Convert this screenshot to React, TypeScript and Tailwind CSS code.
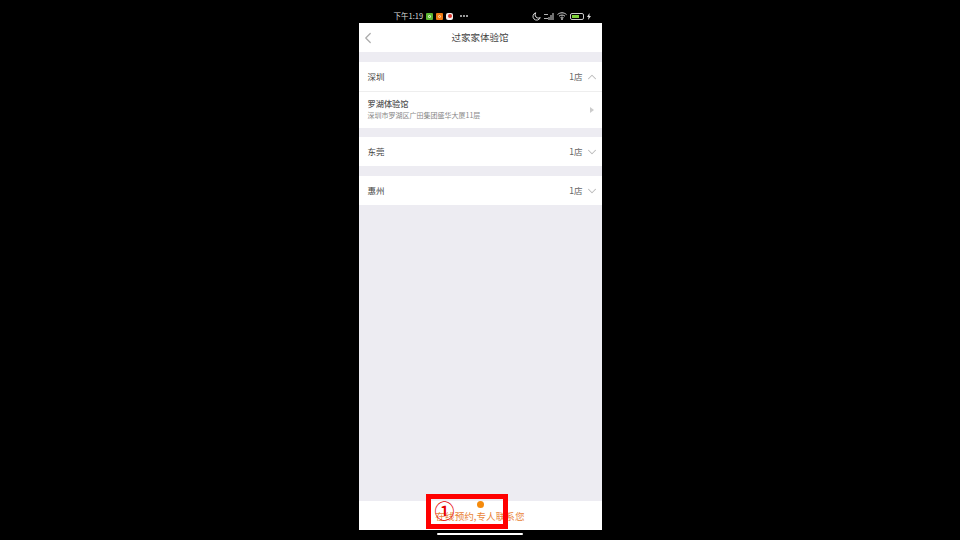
import { ChevronDown, ChevronLeft, ChevronUp } from "lucide-react";

const CJK = "font-['Noto_Sans_CJK_SC','Liberation_Sans',sans-serif]";

function CityRow({ name, open }: { name: string; open?: boolean }) {
  const Icon = open ? ChevronUp : ChevronDown;
  return (
    <div className="flex h-[29px] items-center justify-between bg-white pl-[9px] pr-[3px]">
      <span className="text-[8.5px] text-[#444]">{name}</span>
      <div className="flex items-center gap-[2px]">
        <span className="text-[8.5px] text-[#666]">1店</span>
        <Icon size={14} strokeWidth={1.8} className="text-[#bbb]" />
      </div>
    </div>
  );
}

function StatusBar() {
  return (
    <div className="flex h-[23px] items-center bg-black pl-[35px] pr-[11px] pt-[9px] text-white">
      <span className="text-[7.5px] leading-none text-[#ddd]">下午1:19</span>
      <span className="ml-[3px] flex h-[7px] w-[7px] items-center justify-center rounded-[1px] bg-[#5cb531]">
        <span className="h-[3px] w-[3px] rounded-[1px] border-[0.5px] border-[#cfeebd]" />
      </span>
      <span className="ml-[3px] flex h-[7px] w-[7px] items-center justify-center rounded-[1px] bg-[#f07a13]">
        <span className="h-[3px] w-[3px] rounded-full border-[0.5px] border-[#ffe0bd]" />
      </span>
      <span className="ml-[3px] flex h-[7px] w-[7px] items-center justify-center rounded-[2px] bg-[#f4f0ef]">
        <span className="h-[4px] w-[4px] rounded-full bg-[#d9332b]" />
      </span>
      <div className="ml-[7px] flex gap-[1.5px]">
        <span className="h-[1.5px] w-[1.5px] rounded-full bg-[#ccc]" />
        <span className="h-[1.5px] w-[1.5px] rounded-full bg-[#ccc]" />
        <span className="h-[1.5px] w-[1.5px] rounded-full bg-[#ccc]" />
      </div>
      <div className="ml-auto flex items-center gap-[3px]">
        {/* moon */}
        <svg width="9" height="9" viewBox="0 0 24 24" fill="none" stroke="#ddd" strokeWidth="2.6">
          <path d="M10 2a10 10 0 1 0 12 13A9 9 0 0 1 10 2z" />
        </svg>
        {/* signal */}
        <svg width="10" height="8" viewBox="0 0 10 8" fill="#ddd">
          <rect x="0" y="2" width="4" height="1" opacity="0.8" />
          <rect x="0" y="6" width="4" height="1" opacity="0.8" />
          <rect x="4.5" y="5" width="1" height="3" />
          <rect x="6.5" y="3" width="1" height="5" />
          <rect x="8.5" y="1" width="1" height="7" />
        </svg>
        {/* wifi */}
        <svg width="10" height="8" viewBox="0 0 10 8" fill="none" stroke="#ddd" strokeWidth="1">
          <path d="M0.5 2.6C3 0.2 7 0.2 9.5 2.6" />
          <path d="M2 4.2C3.7 2.7 6.3 2.7 8 4.2" />
          <path d="M3.5 5.7C4.4 5 5.6 5 6.5 5.7" />
          <circle cx="5" cy="7" r="0.5" fill="#ddd" />
        </svg>
        {/* battery */}
        <div className="flex h-[7px] w-[14px] items-center rounded-[2px] border border-[#ccc] p-[1px]">
          <div className="h-full w-[7px] bg-[#7fd13b]" />
        </div>
        <svg width="4" height="7" viewBox="0 0 4 7" fill="#ddd">
          <path d="M2.5 0L0 4h1.5L1 7l3-4H2.4z" />
        </svg>
      </div>
    </div>
  );
}

export default function App() {
  return (
    <div className={`flex h-[540px] w-[960px] justify-center bg-black ${CJK}`}>
      <div className="relative flex w-[243px] flex-col">
        <StatusBar />
        <div className="relative flex h-[29px] items-center justify-center bg-white">
          <ChevronLeft size={18} strokeWidth={1.6} className="absolute left-0 text-[#aaa]" />
          <span className="text-[9.5px] text-[#444]">过家家体验馆</span>
        </div>

        <div className="flex flex-1 flex-col bg-[#edecf2] pt-[10px]">
          <CityRow name="深圳" open />
          <div className="flex h-[37px] items-center justify-between border-t border-[#eee] bg-white pl-[9px] pr-[8px]">
            <div className="-mt-[3px] flex flex-col gap-[1px]">
              <span className="text-[8.2px] font-medium leading-[11px] text-[#555]">罗湖体验馆</span>
              <span className="text-[7px] leading-[10px] text-[#888]">深圳市罗湖区广田集团盛华大厦11层</span>
            </div>
            <span className="h-0 w-0 border-y-[3px] border-l-[4px] border-y-transparent border-l-[#ccc]" />
          </div>
          <div className="mt-[9px]">
            <CityRow name="东莞" />
          </div>
          <div className="mt-[10px]">
            <CityRow name="惠州" />
          </div>
        </div>

        <div className="flex h-[29px] items-center justify-center bg-white pt-[2px]">
          <span className="text-[9.6px] text-[#e9853a]">在线预约,专人联系您</span>
        </div>
        <div className="flex h-[10px] justify-center bg-black pt-[3px]">
          <div className="h-[2px] w-[86px] rounded-full bg-white" />
        </div>

        {/* annotation over the bottom bar */}
        <div className="absolute left-[67px] top-[494px] h-[35px] w-[82px] border-[5px] border-[#ff0000]">
          <span className="absolute left-[4px] top-0 text-[20px] font-medium leading-[24px] text-[#e60000]">①</span>
          <span className="absolute left-[46px] top-[2px] h-[7px] w-[7px] rounded-full bg-[#f58a0b]" />
        </div>
      </div>
    </div>
  );
}
